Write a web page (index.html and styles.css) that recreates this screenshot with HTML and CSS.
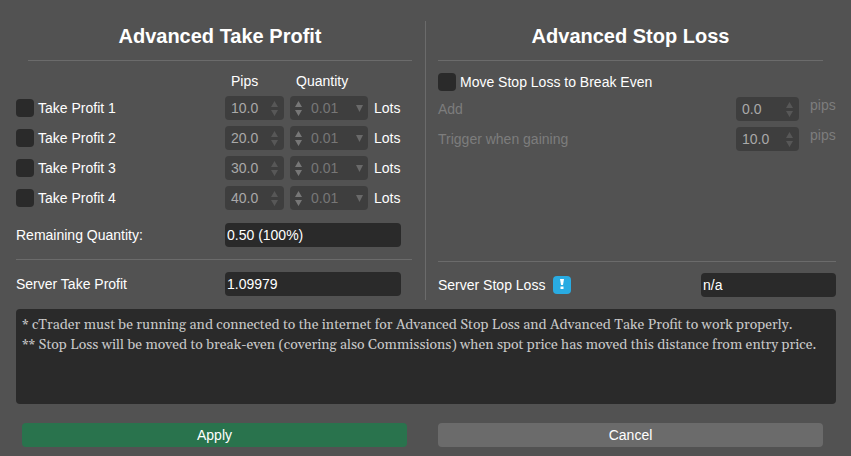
FILE: index.html
```
<!DOCTYPE html>
<html lang="en">
<head>
    <meta charset="UTF-8">
    <meta name="viewport" content="width=device-width, initial-scale=1.0">
    <title>Advanced Protection</title>
    <link rel="stylesheet" href="styles.css">
</head>
<body>

    <form class="dialog">
        <div class="panels">
            <section class="panel take-profit">
                <h2>Advanced Take Profit</h2>
                <div class="tp-row tp-head">
                    <span></span>
                    <span class="head">Pips</span>
                    <span class="head">Quantity</span>
                </div>
                <div class="tp-row">
                    <label class="check"><input type="checkbox"> Take Profit 1</label>
                    <div class="spinner">
                        <input type="text" value="10.0" aria-label="Take Profit 1 pips" disabled>
                        <svg class="arrows" viewBox="0 0 7 15"><path d="M0 6 3.5 0 7 6zM0 9h7L3.5 15z"/></svg>
                    </div>
                    <div class="spinner quantity">
                        <svg class="arrows" viewBox="0 0 7 15"><path d="M0 6 3.5 0 7 6zM0 9h7L3.5 15z"/></svg>
                        <input type="text" value="0.01" aria-label="Take Profit 1 quantity" disabled>
                        <svg class="drop" viewBox="0 0 7 7"><path d="M0 0h7L3.5 7z"/></svg>
                    </div>
                    <span>Lots</span>
                </div>
                <div class="tp-row">
                    <label class="check"><input type="checkbox"> Take Profit 2</label>
                    <div class="spinner">
                        <input type="text" value="20.0" aria-label="Take Profit 2 pips" disabled>
                        <svg class="arrows" viewBox="0 0 7 15"><path d="M0 6 3.5 0 7 6zM0 9h7L3.5 15z"/></svg>
                    </div>
                    <div class="spinner quantity">
                        <svg class="arrows" viewBox="0 0 7 15"><path d="M0 6 3.5 0 7 6zM0 9h7L3.5 15z"/></svg>
                        <input type="text" value="0.01" aria-label="Take Profit 2 quantity" disabled>
                        <svg class="drop" viewBox="0 0 7 7"><path d="M0 0h7L3.5 7z"/></svg>
                    </div>
                    <span>Lots</span>
                </div>
                <div class="tp-row">
                    <label class="check"><input type="checkbox"> Take Profit 3</label>
                    <div class="spinner">
                        <input type="text" value="30.0" aria-label="Take Profit 3 pips" disabled>
                        <svg class="arrows" viewBox="0 0 7 15"><path d="M0 6 3.5 0 7 6zM0 9h7L3.5 15z"/></svg>
                    </div>
                    <div class="spinner quantity">
                        <svg class="arrows" viewBox="0 0 7 15"><path d="M0 6 3.5 0 7 6zM0 9h7L3.5 15z"/></svg>
                        <input type="text" value="0.01" aria-label="Take Profit 3 quantity" disabled>
                        <svg class="drop" viewBox="0 0 7 7"><path d="M0 0h7L3.5 7z"/></svg>
                    </div>
                    <span>Lots</span>
                </div>
                <div class="tp-row">
                    <label class="check"><input type="checkbox"> Take Profit 4</label>
                    <div class="spinner">
                        <input type="text" value="40.0" aria-label="Take Profit 4 pips" disabled>
                        <svg class="arrows" viewBox="0 0 7 15"><path d="M0 6 3.5 0 7 6zM0 9h7L3.5 15z"/></svg>
                    </div>
                    <div class="spinner quantity">
                        <svg class="arrows" viewBox="0 0 7 15"><path d="M0 6 3.5 0 7 6zM0 9h7L3.5 15z"/></svg>
                        <input type="text" value="0.01" aria-label="Take Profit 4 quantity" disabled>
                        <svg class="drop" viewBox="0 0 7 7"><path d="M0 0h7L3.5 7z"/></svg>
                    </div>
                    <span>Lots</span>
                </div>
                <div class="tp-row remaining">
                    <label for="remaining">Remaining Quantity:</label>
                    <input type="text" class="field" id="remaining" value="0.50 (100%)" readonly>
                </div>
                <div class="tp-row server">
                    <label for="serverTp">Server Take Profit</label>
                    <input type="text" class="field" id="serverTp" value="1.09979" readonly>
                </div>
            </section>

            <section class="panel stop-loss">
                <h2>Advanced Stop Loss</h2>
                <label class="check break-even"><input type="checkbox"> Move Stop Loss to Break Even</label>
                <div class="sl-row">
                    <label for="add">Add</label>
                    <div class="spinner">
                        <input type="text" id="add" value="0.0" disabled>
                        <svg class="arrows" viewBox="0 0 7 15"><path d="M0 6 3.5 0 7 6zM0 9h7L3.5 15z"/></svg>
                    </div>
                    <span class="unit">pips</span>
                </div>
                <div class="sl-row">
                    <label for="trigger">Trigger when gaining</label>
                    <div class="spinner">
                        <input type="text" id="trigger" value="10.0" disabled>
                        <svg class="arrows" viewBox="0 0 7 15"><path d="M0 6 3.5 0 7 6zM0 9h7L3.5 15z"/></svg>
                    </div>
                    <span class="unit">pips</span>
                </div>
                <div class="server">
                    <label for="serverSl">Server Stop Loss</label>
                    <svg class="info" viewBox="0 0 18 18">
                        <rect width="18" height="18" rx="4" fill="#29abe2"/>
                        <path d="M7 3h4l-1 6H8zM7.5 10.5h3V13h-3z" fill="#fff"/>
                    </svg>
                    <input type="text" class="field" id="serverSl" value="n/a" readonly>
                </div>
            </section>
        </div>

        <div class="notes">
            <p>* cTrader must be running and connected to the internet for Advanced Stop Loss and Advanced Take Profit to work properly.</p>
            <p>** Stop Loss will be moved to break-even (covering also Commissions) when spot price has moved this distance from entry price.</p>
        </div>

        <div class="buttons">
            <button type="submit" class="apply">Apply</button>
            <button type="button" class="cancel">Cancel</button>
        </div>
    </form>

</body>
</html>
```
FILE: styles.css
```
* {
    box-sizing: border-box;
}
body {
    margin: 0;
    background: #525252;
    color: white;
    font-family: "Liberation Sans", Arial, sans-serif;
    font-size: 14px;
    line-height: 18px;
}
input, button {
    font: inherit;
    color: inherit;
    border: none;
}
.dialog {
    padding: 21px 15px 9px 16px;
}
.panels {
    display: grid;
    grid-template-columns: 1fr 1fr;
}
.panel {
    display: flex;
    flex-direction: column;
}
.take-profit {
    gap: 6px;
    padding: 0 13px 4px 0;
    border-right: 1px solid #6b6b6b;
}
.stop-loss {
    gap: 6px;
    padding: 0 0 3px 12px;
}
h2 {
    margin: 0;
    padding-bottom: 9px;
    border-bottom: 1px solid #6b6b6b;
    font-size: 20px;
    line-height: 30px;
    text-align: center;
}
.take-profit h2 {
    margin-left: 12px;
}
.stop-loss h2 {
    margin-right: 13px;
}

/* take profit rows */
.tp-row {
    display: grid;
    grid-template-columns: 1fr 59px 78px 38px;
    column-gap: 6px;
    align-items: center;
    height: 24px;
}
.tp-head {
    margin-top: 5px;
    height: 18px;
}
.head {
    padding-left: 6px;
}
.remaining {
    margin-top: 7px;
}
.tp-row .field {
    grid-column: 2 / 5;
    width: 176px;
}
.check {
    display: flex;
    align-items: center;
    gap: 4px;
}
.check input {
    appearance: none;
    width: 18px;
    height: 18px;
    margin: 0;
    border-radius: 4px;
    background: #2a2a2a;
}
.check input:checked {
    background: #29734d;
}
.spinner {
    display: flex;
    align-items: center;
    height: 24px;
    padding: 0 6px;
    border-radius: 4px;
    background: #3e3e3e;
    color: #a9a9a9;
}
.spinner input {
    flex: 1;
    min-width: 0;
    width: 100%;
    height: 22px;
    padding: 0;
    background: none;
}
.arrows {
    width: 7px;
    height: 15px;
    fill: #575757;
}
.quantity {
    gap: 9px;
    padding: 0 5px;
    color: #777777;
}
.quantity .arrows {
    fill: #777777;
}
.drop {
    width: 7px;
    height: 7px;
    fill: #696969;
}
.field {
    height: 24px;
    padding: 0 2px;
    border-radius: 4px;
    background: #2a2a2a;
}

/* stop loss rows */
.break-even {
    margin-top: 6px;
}
.sl-row {
    display: grid;
    grid-template-columns: 1fr 63px 26px;
    column-gap: 11px;
    align-items: center;
    height: 24px;
    color: #7d7d7d;
}
.unit {
    align-self: start;
    line-height: 16px;
}
.server {
    border-top: 1px solid #6b6b6b;
}
.take-profit .server {
    height: 37px;
    margin-top: 6px;
    padding-top: 12px;
}
.stop-loss .server {
    display: flex;
    align-items: center;
    gap: 8px;
    margin-top: auto;
    padding-top: 11px;
}
.info {
    width: 18px;
    height: 18px;
}
.stop-loss .field {
    width: 135px;
    margin-left: auto;
}

.notes {
    min-height: 95px;
    margin-top: 9px;
    padding: 6px;
    border-radius: 4px;
    background: #2a2a2a;
    color: #c8c8c8;
    font-family: Gelasio, Georgia, "Liberation Serif", serif;
    font-size: 14px;
    line-height: 20px;
}
.notes p {
    margin: 0;
}
.buttons {
    display: grid;
    grid-template-columns: 1fr 1fr;
    gap: 31px;
    margin-top: 19px;
    padding: 0 13px 0 6px;
}
.buttons button {
    height: 24px;
    border-radius: 4px;
    cursor: pointer;
}
.apply {
    background: #29734d;
}
.cancel {
    background: #6b6b6b;
}
```
